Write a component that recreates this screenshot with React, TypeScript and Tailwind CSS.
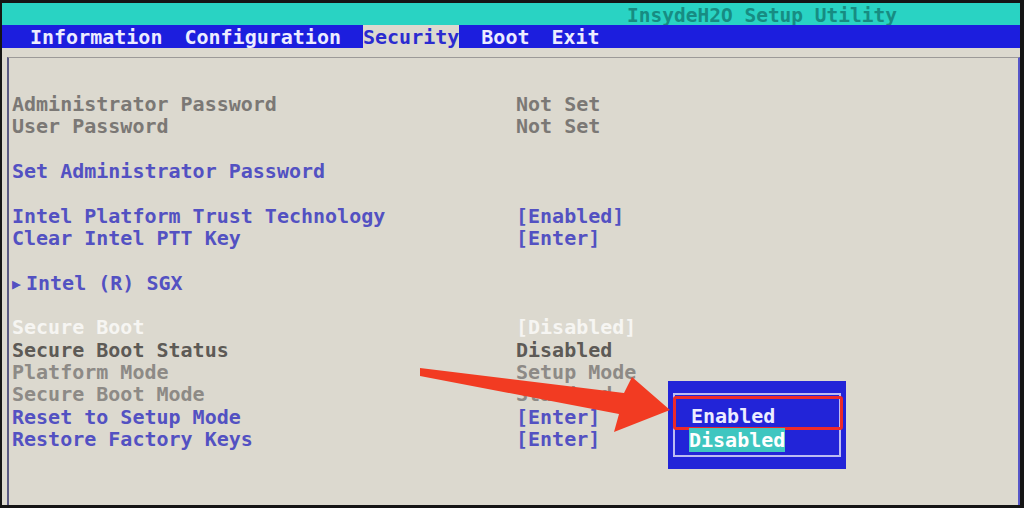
import React from "react";

type Tone = "gray" | "blue" | "white" | "dark" | "light";

type Row = { label: string; value?: string; tone: Tone } | null;

const rows: Row[] = [
  { label: "Administrator Password", value: "Not Set", tone: "gray" },
  { label: "User Password", value: "Not Set", tone: "gray" },
  null,
  { label: "Set Administrator Password", tone: "blue" },
  null,
  { label: "Intel Platform Trust Technology", value: "[Enabled]", tone: "blue" },
  { label: "Clear Intel PTT Key", value: "[Enter]", tone: "blue" },
  null,
  { label: "Intel (R) SGX", tone: "blue" },
  null,
  { label: "Secure Boot", value: "[Disabled]", tone: "white" },
  { label: "Secure Boot Status", value: "Disabled", tone: "dark" },
  { label: "Platform Mode", value: "Setup Mode", tone: "light" },
  { label: "Secure Boot Mode", value: "Standard", tone: "light" },
  { label: "Reset to Setup Mode", value: "[Enter]", tone: "blue" },
  { label: "Restore Factory Keys", value: "[Enter]", tone: "blue" },
];

const toneClass: Record<Tone, string> = {
  gray: "text-[#7b7875]",
  blue: "text-[#5351c2]",
  white: "text-[#f6f5f2]",
  dark: "text-[#5d5a56]",
  light: "text-[#8d8a86]",
};

const menu = ["Information", "Configuration", "Security", "Boot", "Exit"];

export default function App() {
  return (
    <div
      className="relative w-[1024px] h-[508px] overflow-hidden bg-[#151515] pt-[3px] pl-[2px] pr-[4px] pb-[3px] flex flex-col font-bold text-[20px]"
      style={{ fontFamily: "'DejaVu Sans Mono', 'Liberation Mono', monospace" }}
    >
      {/* title bar */}
      <div className="h-[22px] bg-[#29d3c3] leading-[22px] pt-[2px] pl-[625px] text-[19.5px] text-[#178c82] whitespace-pre">
        InsydeH2O Setup Utility
      </div>

      {/* menu bar */}
      <div className="h-[23px] bg-[#1c1ede] flex items-stretch gap-[22px] pl-[28px] leading-[24px] text-[#ececff]">
        {menu.map((m) =>
          m === "Security" ? (
            <span key={m} className="bg-[#dcd9cf] text-[#2b2bd0]">
              {m}
            </span>
          ) : (
            <span key={m}>{m}</span>
          )
        )}
      </div>

      {/* main panel */}
      <div className="flex-1 bg-[#dcd9cf] pl-[5px] pt-[9px] flex flex-col">
        <div className="flex-1 border-l-2 border-t border-r-2 border-l-[#5a5a82] border-t-[#9c9a98] border-r-[#5656c8] pl-[3px] pt-[35px]">
          {rows.map((r, i) =>
            r ? (
              <div
                key={i}
                className={`flex h-[22.33px] leading-[22.33px] whitespace-pre ${toneClass[r.tone]}`}
              >
                <span className="w-[504px]">
                  {r.label === "Intel (R) SGX" ? (
                    <>
                      <span className="inline-block w-[14px] text-[15px] align-[1px]">▶</span>
                      {r.label}
                    </>
                  ) : (
                    r.label
                  )}
                </span>
                {r.value && <span>{r.value}</span>}
              </div>
            ) : (
              <div key={i} className="h-[22.33px]" />
            )
          )}
        </div>
      </div>

      {/* option popup */}
      <div className="absolute left-[668px] top-[381px] w-[178px] h-[88px] bg-[#2224d8] pt-[12px] pl-[5px] pr-[5px]">
        <div className="h-[64px] border-2 border-[#bcbcf2] pt-[1px]">
          <div className="h-[34px] -ml-[2px] -mr-[4px] border-[3px] border-[#ec2a2a] rounded-[3px] pl-[15px] leading-[30px] pt-[2px] text-[#ececff]">
            Enabled
          </div>
          <div className="pl-[14px] leading-[18px] mt-[1px]">
            <span className="bg-[#3fc6c0] text-white">Disabled</span>
          </div>
        </div>
      </div>

      {/* red pointer arrow */}
      <svg
        className="absolute inset-0 pointer-events-none"
        width="1024"
        height="508"
        viewBox="0 0 1024 508"
      >
        <polygon
          points="420,368 624,393 632,377 670,410 614,432 619,414 420,376"
          fill="#f23b22"
        />
      </svg>
    </div>
  );
}
